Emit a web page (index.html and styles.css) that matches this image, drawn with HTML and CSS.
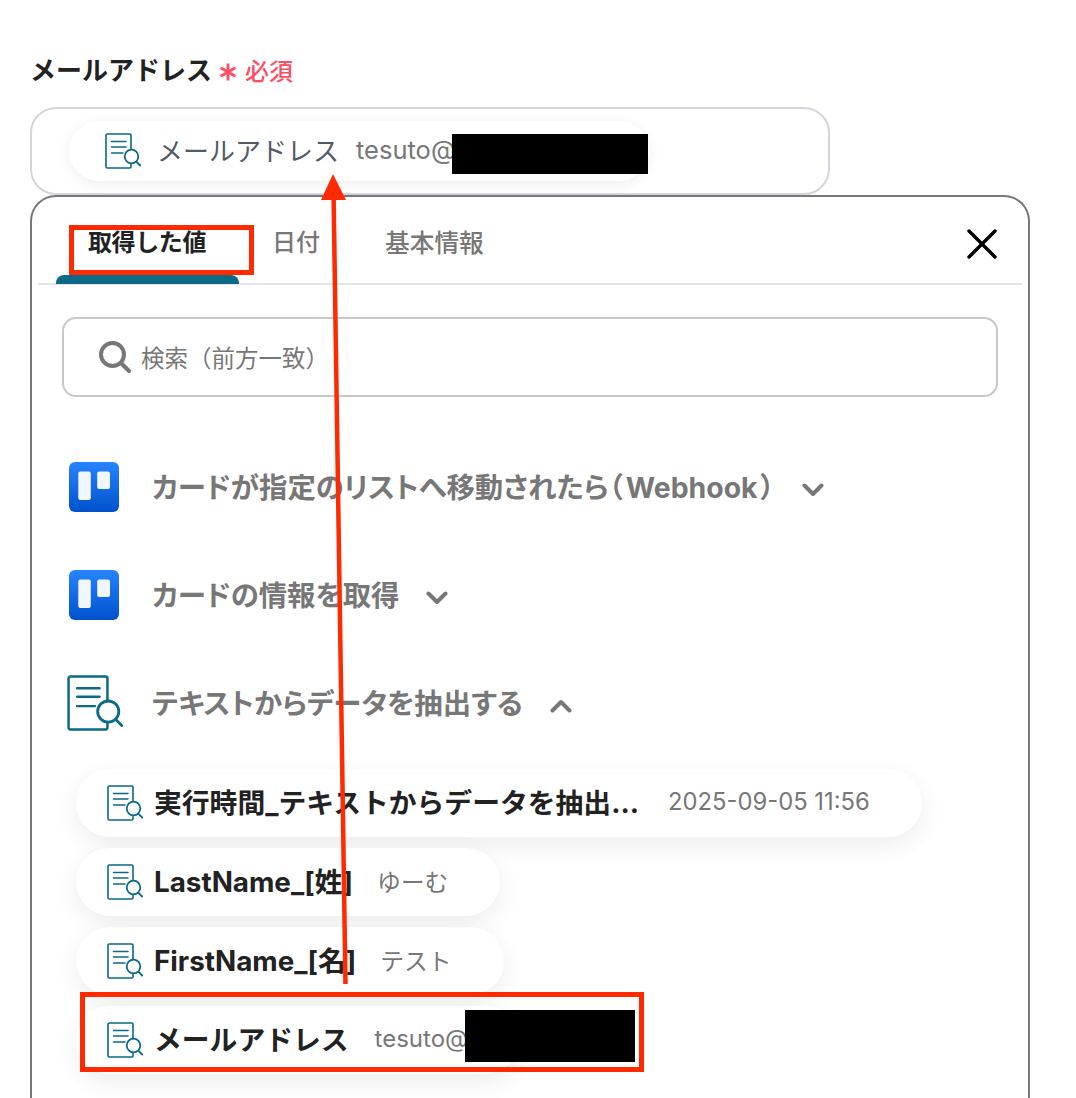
FILE: index.html
```html
<!DOCTYPE html>
<html lang="ja">
<head>
<meta charset="utf-8">
<title>メールアドレス</title>
<link rel="stylesheet" href="styles.css">
</head>
<body>
<svg class="defs" width="0" height="0" aria-hidden="true">
  <defs>
    <symbol id="doc" viewBox="0 0 36 36">
      <path d="M26 16.500V2.200A1.200 1.200 0 0 0 24.800 1H2.200A1.200 1.200 0 0 0 1 2.200V33.800A1.200 1.200 0 0 0 2.200 35H24.800A1.200 1.200 0 0 0 26 33.800V31" fill="none" stroke="#0b6a85" stroke-width="1.600" stroke-linecap="round"/>
      <path d="M6.500 8.500H21M6.500 14H21M6.500 20H18" fill="none" stroke="#0b6a85" stroke-width="1.500" stroke-linecap="round"/>
      <circle cx="26.500" cy="23.500" r="6.800" fill="#fff" stroke="#0b6a85" stroke-width="1.800"/>
      <path d="M31.500 28.800L35.200 32.500" fill="none" stroke="#0b6a85" stroke-width="1.800" stroke-linecap="round"/>
    </symbol>
    <linearGradient id="trello" x1="0" y1="0" x2="0" y2="1">
      <stop offset="0" stop-color="#2684ff"/>
      <stop offset="1" stop-color="#0052cc"/>
    </linearGradient>
    <symbol id="trello-logo" viewBox="0 0 50 50">
      <rect width="50" height="50" rx="6" fill="url(#trello)"/>
      <rect x="9.300" y="9.500" width="12.500" height="28.500" rx="2" fill="#f2f6fd"/>
      <rect x="28.200" y="9.500" width="12.800" height="17.500" rx="2" fill="#f2f6fd"/>
    </symbol>
  </defs>
</svg>

<main class="page">
  <div class="label-row">
    <span class="label">メールアドレス</span>
    <svg class="asterisk" viewBox="0 0 18 18" aria-hidden="true"><path d="M9 .500V17.500M1.600 4.700L16.400 13.300M16.400 4.700L1.600 13.300" fill="none" stroke="#ff4d63" stroke-width="2.800"/></svg>
    <span class="required">必須</span>
  </div>

  <div class="field">
    <div class="chip chip-field">
      <svg class="chip-icon"><use href="#doc"/></svg>
      <span class="chip-name-light">メールアドレス</span>
      <span class="chip-value">tesuto@</span>
    </div>
  </div>

  <section class="panel">
    <div class="tabs">
      <div class="tab tab-active">取得した値</div>
      <div class="tab">日付</div>
      <div class="tab">基本情報</div>
      <svg class="close" viewBox="0 0 30 30"><path d="M2 2l26 26M28 2L2 28" stroke="#000" stroke-width="3.400" stroke-linecap="round"/></svg>
    </div>

    <div class="search">
      <svg class="search-icon" viewBox="0 0 32 32"><circle cx="13.500" cy="13.500" r="11.500" fill="none" stroke="#777" stroke-width="4"/><path d="M22 22l8 8" stroke="#777" stroke-width="4" stroke-linecap="round"/></svg>
      <span class="search-text">検索（前方一致）</span>
    </div>

    <div class="group">
      <svg class="group-icon"><use href="#trello-logo"/></svg>
      <span class="group-title">カードが指定のリストへ移動されたら（<span class="group-latin">Webhook</span>）</span>
      <svg class="chev" viewBox="0 0 22 14"><path d="M2.500 2.500L11 11l8.500-8.500" fill="none" stroke="#777" stroke-width="4" stroke-linecap="round" stroke-linejoin="round"/></svg>
    </div>
    <div class="group">
      <svg class="group-icon"><use href="#trello-logo"/></svg>
      <span class="group-title">カードの情報を取得</span>
      <svg class="chev" viewBox="0 0 22 14"><path d="M2.500 2.500L11 11l8.500-8.500" fill="none" stroke="#777" stroke-width="4" stroke-linecap="round" stroke-linejoin="round"/></svg>
    </div>
    <div class="group">
      <svg class="group-icon group-icon-doc"><use href="#doc"/></svg>
      <span class="group-title">テキストからデータを抽出する</span>
      <svg class="chev" viewBox="0 0 22 14"><path d="M2.500 11.500L11 3l8.500 8.500" fill="none" stroke="#777" stroke-width="4" stroke-linecap="round" stroke-linejoin="round"/></svg>
    </div>

    <div class="chip-list">
      <div class="chip chip-wide">
        <svg class="chip-icon"><use href="#doc"/></svg>
        <span class="chip-name">実行時間_テキストからデータを抽出...</span>
        <span class="chip-value">2025-09-05 11:56</span>
      </div>
      <div class="chip">
        <svg class="chip-icon"><use href="#doc"/></svg>
        <span class="chip-name">LastName_[姓]</span>
        <span class="chip-value">ゆーむ</span>
      </div>
      <div class="chip">
        <svg class="chip-icon"><use href="#doc"/></svg>
        <span class="chip-name">FirstName_[名]</span>
        <span class="chip-value">テスト</span>
      </div>
      <div class="chip chip-mail">
        <svg class="chip-icon"><use href="#doc"/></svg>
        <span class="chip-name">メールアドレス</span>
        <span class="chip-value">tesuto@</span>
      </div>
    </div>
  </section>
</main>

<div class="redact redact-top"></div>
<div class="redact redact-bottom"></div>
<div class="mark mark-tab"></div>
<div class="mark mark-chip"></div>
<svg class="arrow" width="1076" height="1098" viewBox="0 0 1076 1098">
  <path d="M345.500 984L333.500 190" fill="none" stroke="#ff2a00" stroke-width="4.500"/>
  <path d="M333 174L321 200H346Z" fill="#ff2a00"/>
</svg>
</body>
</html>
```

FILE: styles.css
```css
* { box-sizing: border-box; }

html, body {
  margin: 0;
  height: 1098px;
  overflow: hidden;
  background: #fff;
}

body {
  position: relative;
  font-family: Inter, "Noto Sans CJK JP", sans-serif;
  color: #222;
}

.defs { position: absolute; }

.page {
  width: 1076px;
  height: 1098px;
  padding: 50px 46px 0 30px;
  overflow: hidden;
}

.label-row {
  display: flex;
  align-items: center;
  height: 40px;
  padding: 0 0 3px;
}

.label {
  font-size: 26px;
  font-weight: 700;
  color: #222;
}

.asterisk {
  width: 18px;
  height: 18px;
  margin: 7px 0 0 7px;
  flex: none;
}

.required {
  font-size: 24px;
  font-weight: 500;
  color: #ff4d63;
  margin: 1px 0 0 8px;
}

.field {
  width: 800px;
  height: 88px;
  margin-top: 17px;
  padding: 12px 0 0 37px;
  border: 2px solid #d2d6dc;
  border-radius: 26px;
}

.chip {
  display: inline-flex;
  align-items: center;
  height: 68px;
  border-radius: 34px;
  background: #fff;
  box-shadow: 0 8px 24px rgba(0, 0, 0, .075);
  padding: 0 52px 0 31px;
  white-space: nowrap;
}

.chip-field {
  width: 580px;
  height: 60px;
  border-radius: 30px;
  padding-left: 36px;
  box-shadow: 0 3px 14px rgba(0, 0, 0, .07);
}

.chip-icon {
  width: 36px;
  height: 36px;
  flex: none;
}

.chip-name {
  margin-left: 11px;
  padding-bottom: 4px;
  font-size: 27.800px;
  font-weight: 700;
  color: #222;
}

.chip-name-light {
  margin-left: 16px;
  padding-bottom: 4px;
  font-size: 26px;
  font-weight: 400;
  color: #555b63;
}

.chip-value {
  margin-left: 24px;
  padding-bottom: 3px;
  font-size: 23.800px;
  font-weight: 400;
  color: #777;
}

.chip-wide .chip-value { margin-left: 29px; }

.chip-mail .chip-value {
  margin-left: 26px;
  font-size: 24px;
}

.chip-field .chip-value {
  margin-left: 17px;
  font-size: 25.500px;
}

.panel {
  width: 1000px;
  height: 903px;
  padding: 0 6px;
  border: 2px solid #777;
  border-bottom: 0;
  border-radius: 26px 26px 0 0;
}

.tabs {
  position: relative;
  display: flex;
  height: 88px;
  border-bottom: 2px solid #e5e5e5;
}

.tab {
  padding: 29px 27px 0;
  font-size: 24px;
  font-weight: 500;
  line-height: 34px;
  color: #777;
}

.tab + .tab + .tab {
  margin-left: 11px;
  font-size: 24.700px;
}

.tab-active {
  width: 183px;
  margin: 0 6px 0 18px;
  padding: 29px 0 0 32px;
  font-weight: 700;
  letter-spacing: -.4px;
  color: #222;
  position: relative;
}

.tab-active::after {
  content: "";
  position: absolute;
  left: 0;
  right: 0;
  bottom: -1px;
  height: 9px;
  background: #0b6a85;
  border-radius: 8px 8px 0 0;
}

.close {
  position: absolute;
  right: 25px;
  top: 32px;
  width: 30px;
  height: 30px;
}

.search {
  display: flex;
  align-items: center;
  width: 936px;
  height: 80px;
  margin: 32px 0 0 24px;
  padding-left: 35px;
  border: 2px solid #c8c8c8;
  border-radius: 14px;
}

.search-icon {
  width: 32px;
  height: 32px;
  flex: none;
}

.search-text {
  margin-left: 10px;
  font-size: 23.500px;
  color: #777;
}

.group {
  display: flex;
  align-items: center;
  height: 50px;
  margin: 65px 0 0 31px;
}

.group + .group { margin-top: 58px; }

.group-icon {
  width: 50px;
  height: 50px;
  flex: none;
}

.group-icon-doc {
  width: 56px;
  height: 56px;
  margin: 0 -4px 0 -2px;
}

.group-title {
  margin-left: 33px;
  padding-bottom: 4px;
  font-size: 28.400px;
  font-weight: 700;
  font-feature-settings: "palt";
  color: #777;
}

.group-latin { margin: 0 3px; }

.chev {
  width: 22px;
  height: 14px;
  margin: 5px 0 0 27px;
  flex: none;
}

.chip-list {
  display: flex;
  flex-direction: column;
  align-items: flex-start;
  gap: 11px;
  margin: 41px 0 0 38px;
}

.chip-wide { width: 846px; }

.redact {
  position: absolute;
  background: #000;
}

.redact-top {
  left: 452px;
  top: 134px;
  width: 196px;
  height: 40px;
}

.redact-bottom {
  left: 465px;
  top: 1010px;
  width: 170px;
  height: 52px;
}

.mark {
  position: absolute;
  border: 5px solid #ff2a00;
}

.mark-tab {
  left: 69px;
  top: 225px;
  width: 185px;
  height: 50px;
}

.mark-chip {
  left: 80px;
  top: 992px;
  width: 564px;
  height: 80px;
}

.arrow {
  position: absolute;
  left: 0;
  top: 0;
}
```
